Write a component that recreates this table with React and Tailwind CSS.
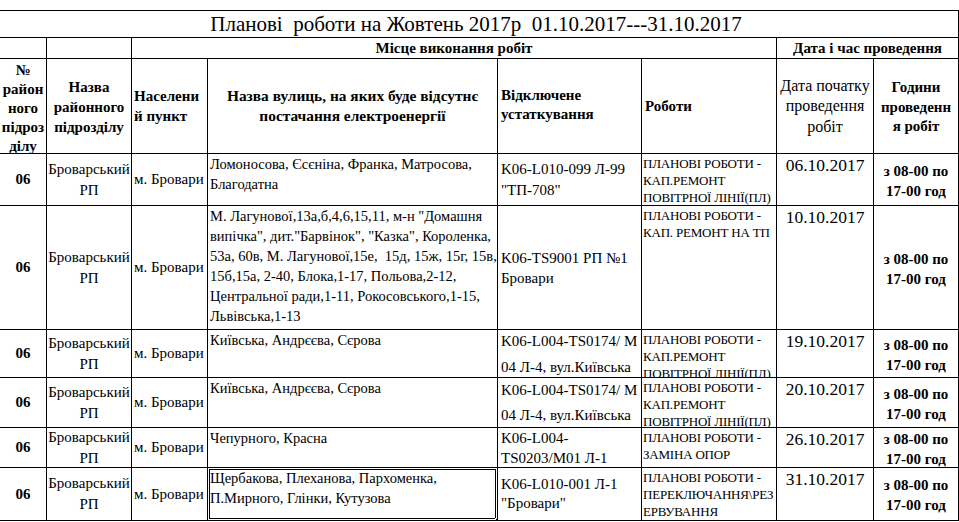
import React from 'react';

const works3 = ['ПЛАНОВІ РОБОТИ -', 'КАП.РЕМОНТ', 'ПОВІТРНОЇ ЛІНІЇ(ПЛ)'];

const rows = [
    {
        streets: ['Ломоносова, Єсєніна, Франка, Матросова,', 'Благодатна'],
        equip: ['K06-L010-099 Л-99', '"ТП-708"'],
        eqLead: 'leading-[21px]',
        works: works3,
        date: '06.10.2017',
    },
    {
        streets: [
            'М. Лагунової,13а,б,4,6,15,11, м-н "Домашня',
            'випічка", дит."Барвінок", "Казка", Короленка,',
            '53а, 60в, М. Лагунової,15е,  15д, 15ж, 15г, 15в,',
            '15б,15а, 2-40, Блока,1-17, Польова,2-12,',
            'Центральної ради,1-11, Рокосовського,1-15,',
            'Львівська,1-13',
        ],
        equip: ['K06-TS9001 РП №1', 'Бровари'],
        eqLead: 'leading-[20px]',
        works: ['ПЛАНОВІ РОБОТИ -', 'КАП. РЕМОНТ НА ТП'],
        date: '10.10.2017',
    },
    {
        streets: ['Київська, Андрєєва, Сєрова'],
        equip: ['K06-L004-TS0174/ M', '04 Л-4, вул.Київська'],
        eqLead: 'leading-[26px]',
        works: works3,
        date: '19.10.2017',
    },
    {
        streets: ['Київська, Андрєєва, Сєрова'],
        equip: ['K06-L004-TS0174/ M', '04 Л-4, вул.Київська'],
        eqLead: 'leading-[25px]',
        works: works3,
        date: '20.10.2017',
    },
    {
        streets: ['Чепурного, Красна'],
        equip: ['K06-L004-', 'TS0203/M01 Л-1'],
        eqLead: 'leading-[20px]',
        works: ['ПЛАНОВІ РОБОТИ -', 'ЗАМІНА ОПОР'],
        date: '26.10.2017',
    },
    {
        streets: ['Щербакова, Плеханова, Пархоменка,', 'П.Мирного, Глінки, Кутузова'],
        equip: ['K06-L010-001 Л-1', '"Бровари"'],
        eqLead: 'leading-[19px]',
        works: ['ПЛАНОВІ РОБОТИ -', 'ПЕРЕКЛЮЧАННЯ\\РЕЗ', 'ЕРВУВАННЯ'],
        date: '31.10.2017',
        selected: true,
    },
];

const Lines = ({ items }) => items.map((t, i) => <div key={i}>{t}</div>);

const App = () => {
    return (
        <div className="bg-white w-[959px] h-[522px] overflow-hidden pt-[10px] font-[family-name:'Liberation_Serif',serif] text-black whitespace-pre">
            <div className="grid grid-cols-[46px_84px_75px_289px_143px_134px_96px_84px] grid-rows-[26px_20px_94px_51px_123px_47px_49px_39px_52px] gap-px bg-black pt-px pr-px pb-px">
                {/* title */}
                <div className="col-span-8 bg-white flex items-center justify-center text-[21px] leading-none pr-[6px] pt-px">
                    Планові  роботи на Жовтень 2017р  01.10.2017---31.10.2017
                </div>

                {/* group header */}
                <div className="bg-white" />
                <div className="bg-white" />
                <div className="col-span-4 bg-white flex items-center justify-center font-bold text-[15px]">
                    Місце виконання робіт
                </div>
                <div className="col-span-2 bg-white flex items-center justify-center font-bold text-[15px]">
                    Дата і час проведення
                </div>

                {/* column header */}
                <div className="bg-white flex flex-col justify-center items-center font-bold text-[15px] leading-[19px] pt-[5px]">
                    <Lines items={['№', 'район', 'ного', 'підроз', 'ділу']} />
                </div>
                <div className="bg-white flex flex-col justify-center items-center font-bold text-[15px] leading-[20px] pt-[2px]">
                    <Lines items={['Назва', 'районного', 'підрозділу']} />
                </div>
                <div className="bg-white flex flex-col justify-center pl-[2px] font-bold text-[15px] leading-[20px]">
                    <Lines items={['Населени', 'й пункт']} />
                </div>
                <div className="bg-white flex flex-col justify-center items-center font-bold text-[15.4px] leading-[20px]">
                    <Lines items={['Назва вулиць, на яких буде відсутнє', 'постачання електроенергії']} />
                </div>
                <div className="bg-white flex flex-col justify-center pl-[3px] font-bold text-[15px] leading-[19px] pb-[2px]">
                    <Lines items={['Відключене', 'устаткування']} />
                </div>
                <div className="bg-white flex flex-col justify-center pl-[3px] font-bold text-[15px]">
                    Роботи
                </div>
                <div className="bg-white flex flex-col justify-center items-center text-[16px] leading-[20.5px] pt-[1px]">
                    <Lines items={['Дата початку', 'проведення', 'робіт']} />
                </div>
                <div className="bg-white flex flex-col justify-center items-center font-bold text-[15px] leading-[19.5px] pt-[3px]">
                    <Lines items={['Години', 'проведенн', 'я робіт']} />
                </div>

                {/* data rows */}
                {rows.map((r, i) => (
                    <React.Fragment key={i}>
                        <div className="bg-white flex items-center justify-center font-bold text-[15px]">06</div>
                        <div className="bg-white flex flex-col justify-center items-center text-[15px] leading-[21px]">
                            <Lines items={['Броварський', 'РП']} />
                        </div>
                        <div className="bg-white flex items-center pl-[2px] text-[15px]">м. Бровари</div>
                        <div className="relative bg-white pl-[2px] text-[14.5px] leading-[20px] overflow-hidden">
                            <Lines items={r.streets} />
                            {r.selected && (
                                <>
                                    <div className="absolute inset-px border border-black" />
                                    <div className="absolute right-[-3px] bottom-[-3px] w-[5px] h-[5px] bg-black border border-white" />
                                </>
                            )}
                        </div>
                        <div className={`bg-white flex flex-col justify-center pl-[3px] text-[15px] ${r.eqLead}`}>
                            <Lines items={r.equip} />
                        </div>
                        <div className="bg-white pl-px pt-px text-[13px] leading-[17px] tracking-[-0.2px] overflow-hidden">
                            <Lines items={r.works} />
                        </div>
                        <div className="bg-white text-center text-[17.5px] leading-[20px] pt-px">{r.date}</div>
                        <div className="bg-white flex flex-col justify-center items-center font-bold text-[15px] leading-[20px] pt-[2px]">
                            <Lines items={['з 08-00 по', '17-00 год']} />
                        </div>
                    </React.Fragment>
                ))}
            </div>
        </div>
    );
};

export default App;
